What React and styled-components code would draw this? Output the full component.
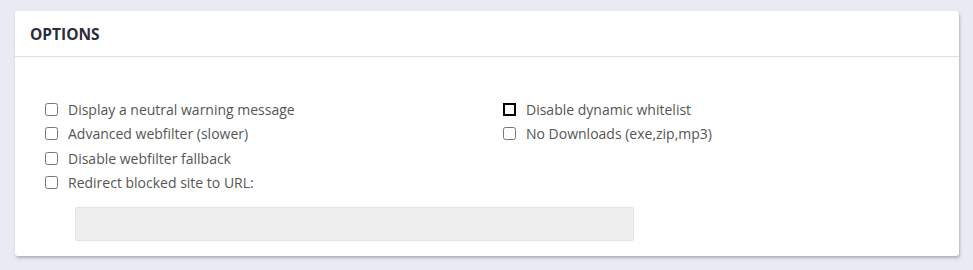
import React from 'react';
import styled, { createGlobalStyle } from 'styled-components';

const GlobalStyle = createGlobalStyle`
  body {
    margin: 0;
    background: #e9ebf3;
    font-family: "Open Sans", "Liberation Sans", sans-serif;
  }
`;

const Page = styled.div`
  padding: 11px 14px 14px 15px;
`;

const Card = styled.div`
  background: #fff;
  border-radius: 3px;
  box-shadow: 1px 2px 3px rgba(60, 64, 90, 0.35);
`;

const CardHeader = styled.div`
  height: 45px;
  display: flex;
  align-items: center;
  padding: 0 15px;
  border-bottom: 1px solid #dfdfe3;
`;

const Title = styled.h3`
  margin: 0;
  font-size: 15.5px;
  font-weight: 700;
  color: #2c2c3a;
`;

const CardBody = styled.div`
  padding: 40px 30px 15px 30px;
`;

const Columns = styled.div`
  display: grid;
  grid-template-columns: 458px 1fr;
`;

const Column = styled.div`
  display: flex;
  flex-direction: column;
`;

const Option = styled.label`
  display: flex;
  align-items: center;
  height: 24.5px;
  font-size: 14px;
  color: #555;
  cursor: pointer;
`;

const Check = styled.input.attrs({ type: 'checkbox' })`
  width: 13px;
  height: 13px;
  margin: 0 10px 0 0;
  outline: ${props => (props.$focused ? '2px solid #000' : 'none')};
  outline-offset: ${props => (props.$focused ? '-2px' : '0')};
  border-radius: 3px;
`;

const UrlInput = styled.input`
  display: block;
  box-sizing: border-box;
  margin: 12px 0 0 30px;
  width: 559px;
  height: 34px;
  background: #eeeeee;
  border: 1px solid #e2e2e2;
  border-radius: 2px;
  font-family: inherit;
  font-size: 13px;
  color: #555;
  padding: 0 10px;
`;

const leftOptions = [
  'Display a neutral warning message',
  'Advanced webfilter (slower)',
  'Disable webfilter fallback',
  'Redirect blocked site to URL:',
];

const rightOptions = ['Disable dynamic whitelist', 'No Downloads (exe,zip,mp3)'];

export default function App() {
  return (
    <>
      <GlobalStyle />
      <Page>
        <Card>
          <CardHeader>
            <Title>OPTIONS</Title>
          </CardHeader>
          <CardBody>
            <Columns>
              <Column>
                {leftOptions.map(text => (
                  <Option key={text}>
                    <Check />
                    {text}
                  </Option>
                ))}
              </Column>
              <Column>
                {rightOptions.map((text, i) => (
                  <Option key={text}>
                    <Check $focused={i === 0} />
                    {text}
                  </Option>
                ))}
              </Column>
            </Columns>
            <UrlInput disabled />
          </CardBody>
        </Card>
      </Page>
    </>
  );
}
